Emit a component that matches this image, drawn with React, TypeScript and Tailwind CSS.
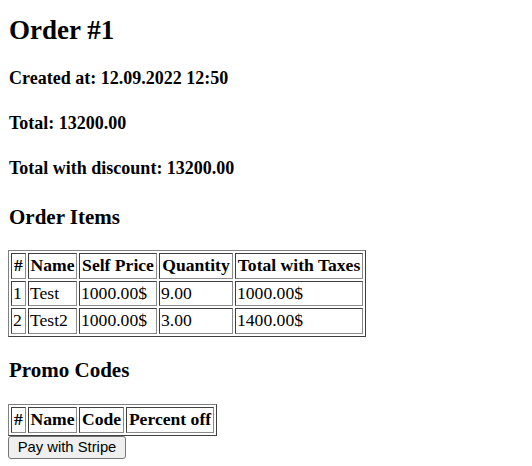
import React from 'react';

const items = [
  { id: 1, name: 'Test', price: '1000.00$', qty: '9.00', total: '1000.00$' },
  { id: 2, name: 'Test2', price: '1000.00$', qty: '3.00', total: '1400.00$' },
];

const tableCls =
  'border-separate border-spacing-[2px] border border-t-[#808080] border-l-[#808080] border-b-[#3f3f3f] border-r-[#3f3f3f]';
const cellCls =
  'border border-t-[#3f3f3f] border-l-[#3f3f3f] border-b-[#8a8a8a] border-r-[#8a8a8a] p-px leading-[21.67px] text-[17.6px] whitespace-nowrap';

const App: React.FC = () => {
  return (
    <div className="px-2 font-['Liberation_Serif',serif] text-black bg-white">
      <h1 className="ml-px mt-[15px] text-[27px] font-bold leading-[30px]">Order #1</h1>
      <h3 className="ml-px mt-[23px] text-[18px] font-bold leading-[21px]">Created at: 12.09.2022 12:50</h3>
      <h3 className="ml-px mt-[24px] text-[18px] font-bold leading-[21px]">Total: 13200.00</h3>
      <h3 className="ml-px mt-[24px] text-[18px] font-bold leading-[21px]">Total with discount: 13200.00</h3>

      <h2 className="ml-px mt-[26px] text-[21px] font-bold leading-[24px]">Order Items</h2>
      <table className={`mt-[21px] ${tableCls}`}>
        <thead>
          <tr>
            <th className={`${cellCls} w-[15px] text-center`}>#</th>
            <th className={`${cellCls} w-[49px] text-center`}>Name</th>
            <th className={`${cellCls} w-[78px] text-center`}>Self Price</th>
            <th className={`${cellCls} w-[74px] text-center`}>Quantity</th>
            <th className={`${cellCls} w-[128px] text-center`}>Total with Taxes</th>
          </tr>
        </thead>
        <tbody>
          {items.map((item) => (
            <tr key={item.id}>
              <td className={cellCls}>{item.id}</td>
              <td className={cellCls}>{item.name}</td>
              <td className={cellCls}>{item.price}</td>
              <td className={cellCls}>{item.qty}</td>
              <td className={cellCls}>{item.total}</td>
            </tr>
          ))}
        </tbody>
      </table>

      <h2 className="ml-px mt-[21px] text-[21px] font-bold leading-[24px]">Promo Codes</h2>
      <table className={`mt-[22px] ${tableCls}`}>
        <thead>
          <tr>
            <th className={`${cellCls} w-[15px] text-center`}>#</th>
            <th className={`${cellCls} w-[49px] text-center`}>Name</th>
            <th className={`${cellCls} w-[45px] text-center`}>Code</th>
            <th className={`${cellCls} w-[88px] text-center`}>Percent off</th>
          </tr>
        </thead>
        <tbody></tbody>
      </table>
      <button className="block h-[23px] w-[118px] rounded-[3px] border border-[#767676] bg-[#efefef] font-['Liberation_Sans',sans-serif] text-[14.8px] leading-none text-black">
        Pay with Stripe
      </button>
    </div>
  );
};

export default App;
